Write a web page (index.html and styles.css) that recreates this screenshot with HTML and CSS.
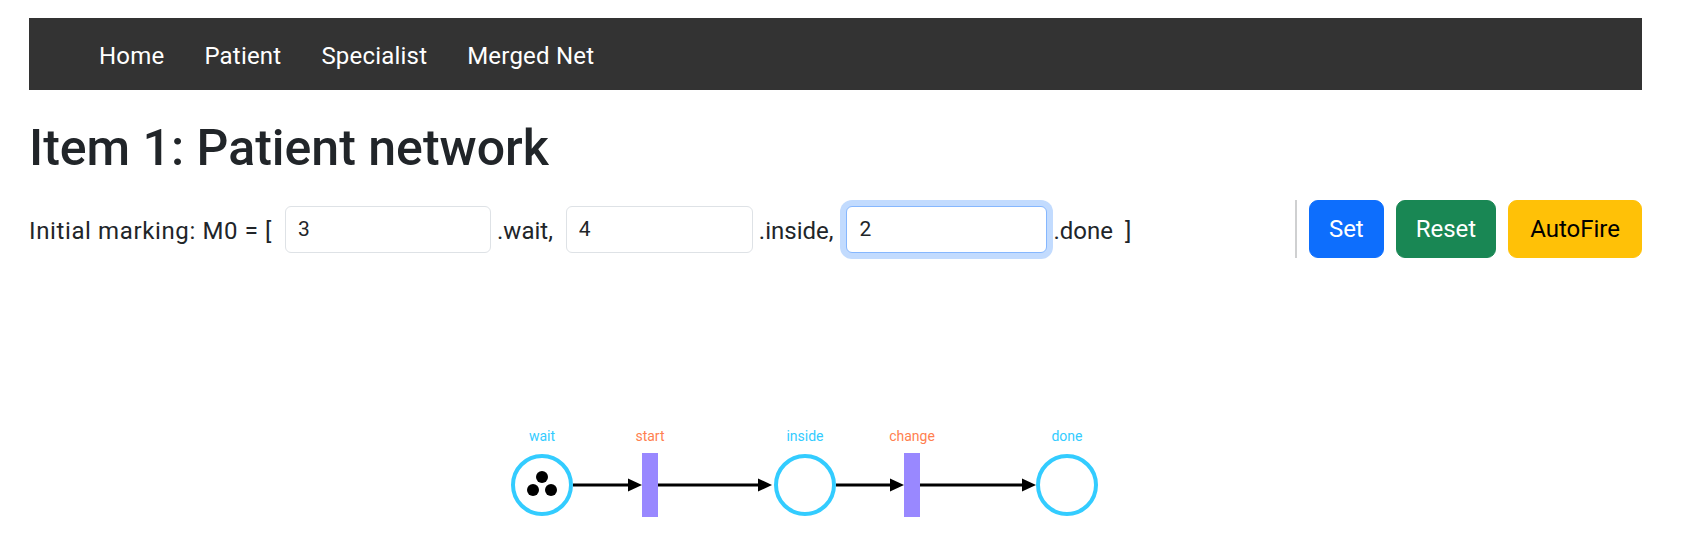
FILE: index.html
```html
<!DOCTYPE html>
<html lang="en">
<head>
<meta charset="utf-8">
<title>Item 1: Patient network</title>
<link rel="stylesheet" href="styles.css">
</head>
<body>
<div class="page">
  <nav class="navbar">
    <ul class="nav">
      <li><a class="nav-link" href="#">Home</a></li>
      <li><a class="nav-link" href="#">Patient</a></li>
      <li><a class="nav-link" href="#">Specialist</a></li>
      <li><a class="nav-link" href="#">Merged Net</a></li>
    </ul>
  </nav>

  <h1 class="title">Item 1: Patient network</h1>

  <div class="marking-row">
    <div class="marking">
      <span class="txt txt-lead">Initial marking: M0 = [</span>
      <input class="field field-1" type="text" value="3">
      <span class="txt">.wait,</span>
      <input class="field field-2" type="text" value="4">
      <span class="txt">.inside,</span>
      <input class="field field-3 focused" type="text" value="2">
      <span class="txt">.done  ]</span>
    </div>
    <div class="actions">
      <span class="vr"></span>
      <button class="btn btn-primary" type="button">Set</button>
      <button class="btn btn-success" type="button">Reset</button>
      <button class="btn btn-warning" type="button">AutoFire</button>
    </div>
  </div>

  <svg class="net" width="1613" height="289" viewBox="0 0 1613 289" xmlns="http://www.w3.org/2000/svg">
    <g class="arc">
      <line x1="544" y1="215" x2="600" y2="215"/>
      <polygon points="599,208.5 613,215 599,221.5"/>
      <line x1="629" y1="215" x2="730" y2="215"/>
      <polygon points="729,208.5 743,215 729,221.5"/>
      <line x1="807" y1="215" x2="862" y2="215"/>
      <polygon points="861,208.5 875,215 861,221.5"/>
      <line x1="891" y1="215" x2="994" y2="215"/>
      <polygon points="993,208.5 1007,215 993,221.5"/>
    </g>
    <g class="place">
      <circle cx="513" cy="215" r="29"/>
      <circle cx="776" cy="215" r="29"/>
      <circle cx="1038" cy="215" r="29"/>
    </g>
    <g class="token">
      <circle cx="513" cy="207" r="6"/>
      <circle cx="504" cy="220" r="6"/>
      <circle cx="522" cy="220" r="6"/>
    </g>
    <g class="transition">
      <rect x="613" y="183" width="16" height="64"/>
      <rect x="875" y="183" width="16" height="64"/>
    </g>
    <text class="lbl lbl-place" x="513" y="171">wait</text>
    <text class="lbl lbl-trans" x="621" y="171">start</text>
    <text class="lbl lbl-place" x="776" y="171">inside</text>
    <text class="lbl lbl-trans" x="883" y="171">change</text>
    <text class="lbl lbl-place" x="1038" y="171">done</text>
  </svg>
</div>
</body>
</html>
```

FILE: styles.css
```css
html, body {
  margin: 0;
  padding: 0;
  background: #ffffff;
}

body {
  font-family: Roboto, "Liberation Sans", Arial, sans-serif;
  font-size: 24px;
  color: #212529;
}

.page {
  padding: 18px 39px 0 29px;
}

/* Navbar */
.navbar {
  height: 72px;
  background: #333333;
  display: flex;
  align-items: center;
}

.nav {
  list-style: none;
  margin: 0;
  padding: 0 0 0 70px;
  display: flex;
  align-items: center;
  gap: 40px;
}

.nav-link {
  display: block;
  color: #ffffff;
  text-decoration: none;
  font-size: 24px;
  line-height: 36px;
  padding-top: 4px;
  letter-spacing: 0.2px;
}

/* Title */
.title {
  margin: 28px 0 22px;
  font-size: 50px;
  line-height: 60px;
  font-weight: 500;
  color: #212529;
}

/* Marking row */
.marking-row {
  display: flex;
  align-items: center;
  justify-content: space-between;
  height: 58px;
}

.marking {
  display: flex;
  align-items: center;
}

.txt {
  white-space: pre;
  font-size: 24px;
  line-height: 36px;
  padding-top: 3px;
}

.txt-lead {
  letter-spacing: 0.62px;
}

.field {
  box-sizing: border-box;
  height: 47px;
  margin: 0 6px 0 13px;
  padding: 6px 12px;
  font-family: inherit;
  font-size: 21px;
  color: #212529;
  background: #ffffff;
  border: 1.5px solid #dee2e6;
  border-radius: 6px;
  outline: none;
}

.field-1 { width: 206px; }
.field-2 { width: 187px; }
.field-3 { width: 201px; }

.focused {
  border-color: #86b7fe;
  box-shadow: 0 0 0 6px rgba(13, 110, 253, 0.25);
}

/* Actions */
.actions {
  display: flex;
  align-items: center;
  gap: 12px;
}

.vr {
  display: block;
  width: 2px;
  height: 58px;
  background: #cfd0d1;
}

.btn {
  box-sizing: border-box;
  height: 58px;
  padding: 9px 19px;
  font-family: inherit;
  font-size: 24px;
  line-height: 37px;
  border: 1.5px solid transparent;
  border-radius: 9px;
  cursor: pointer;
}

.btn-primary {
  background: #0d6efd;
  border-color: #0d6efd;
  color: #ffffff;
}

.btn-success {
  background: #198754;
  border-color: #198754;
  color: #ffffff;
}

.btn-warning {
  background: #ffc107;
  border-color: #ffc107;
  color: #000000;
  padding: 9px 21px;
}

/* Petri net */
.net {
  display: block;
  margin-top: 12px;
}

.arc line {
  stroke: #000000;
  stroke-width: 3;
}

.arc polygon {
  fill: #000000;
}

.place circle {
  fill: #ffffff;
  stroke: #33ccff;
  stroke-width: 4;
}

.token circle {
  fill: #000000;
}

.transition rect {
  fill: #9988ff;
}

.lbl {
  font-family: Roboto, "Liberation Sans", Arial, sans-serif;
  font-size: 14px;
  text-anchor: middle;
}

.lbl-place {
  fill: #33ccff;
}

.lbl-trans {
  fill: #ff7f50;
}
```
